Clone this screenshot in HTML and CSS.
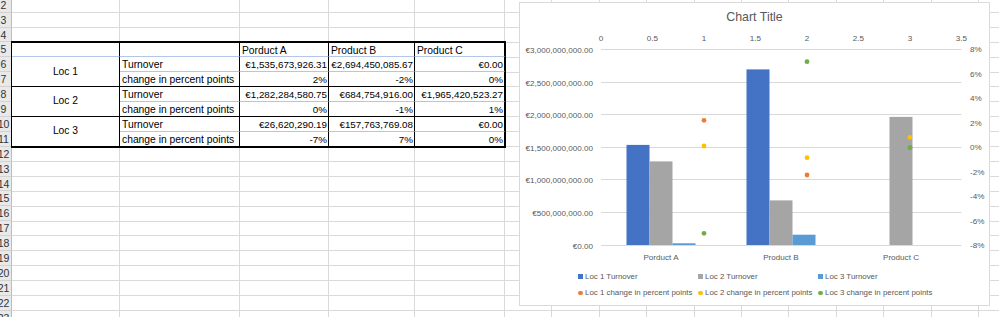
FILE: index.html
```html
<!DOCTYPE html>
<html>
<head>
<meta charset="utf-8">
<title>Sheet</title>
<link rel="stylesheet" href="styles.css">
</head>
<body>
<div class="sheet">
  <div class="rh">2</div><div class="rh">3</div><div class="rh">4</div><div class="rh">5</div>
  <div class="rh">6</div><div class="rh">7</div><div class="rh">8</div><div class="rh">9</div>
  <div class="rh">10</div><div class="rh">11</div><div class="rh">12</div><div class="rh">13</div>
  <div class="rh">14</div><div class="rh">15</div><div class="rh">16</div><div class="rh">17</div>
  <div class="rh">18</div><div class="rh">19</div><div class="rh">20</div><div class="rh">21</div>
  <div class="rh">22</div><div class="rh">23</div>

  <div class="tbl">
    <div class="c top bb"></div>
    <div class="c top bb"></div>
    <div class="c top bb">Porduct A</div>
    <div class="c top bb">Product B</div>
    <div class="c top bb">Product C</div>

    <div class="c loc">Loc 1</div>
    <div class="c bb">Turnover</div>
    <div class="c bb num">€1,535,673,926.31</div>
    <div class="c bb num">€2,694,450,085.67</div>
    <div class="c bb num">€0.00</div>
    <div class="c bk">change in percent points</div>
    <div class="c bk num">2%</div>
    <div class="c bk num">-2%</div>
    <div class="c bk num">0%</div>

    <div class="c loc">Loc 2</div>
    <div class="c bb">Turnover</div>
    <div class="c bb num">€1,282,284,580.75</div>
    <div class="c bb num">€684,754,916.00</div>
    <div class="c bb num">€1,965,420,523.27</div>
    <div class="c bk">change in percent points</div>
    <div class="c bk num">0%</div>
    <div class="c bk num">-1%</div>
    <div class="c bk num">1%</div>

    <div class="c loc">Loc 3</div>
    <div class="c bb">Turnover</div>
    <div class="c bb num">€26,620,290.19</div>
    <div class="c bb num">€157,763,769.08</div>
    <div class="c bb num">€0.00</div>
    <div class="c bk">change in percent points</div>
    <div class="c bk num">-7%</div>
    <div class="c bk num">7%</div>
    <div class="c bk num">0%</div>
  </div>
</div>

<div class="chart">
  <div class="title">Chart Title</div>
  <svg class="plot" width="469" height="240" viewBox="520 27 469 240">
    <g class="ax" text-anchor="middle">
      <text x="601" y="40.5">0</text>
      <text x="652.5" y="40.5">0.5</text>
      <text x="704" y="40.5">1</text>
      <text x="755.5" y="40.5">1.5</text>
      <text x="807" y="40.5">2</text>
      <text x="858.5" y="40.5">2.5</text>
      <text x="910" y="40.5">3</text>
      <text x="961.5" y="40.5">3.5</text>
    </g>
    <g class="grid">
      <line x1="601" x2="961.5" y1="49.5" y2="49.5"/>
      <line x1="601" x2="961.5" y1="82.5" y2="82.5"/>
      <line x1="601" x2="961.5" y1="114.5" y2="114.5"/>
      <line x1="601" x2="961.5" y1="147.5" y2="147.5"/>
      <line x1="601" x2="961.5" y1="179.5" y2="179.5"/>
      <line x1="601" x2="961.5" y1="212.5" y2="212.5"/>
      <line x1="601" x2="961.5" y1="245.5" y2="245.5"/>
    </g>
    <g class="ax" text-anchor="end">
      <text x="593" y="52.9">€3,000,000,000.00</text>
      <text x="593" y="85.5">€2,500,000,000.00</text>
      <text x="593" y="118.1">€2,000,000,000.00</text>
      <text x="593" y="150.7">€1,500,000,000.00</text>
      <text x="593" y="183.3">€1,000,000,000.00</text>
      <text x="593" y="215.9">€500,000,000.00</text>
      <text x="593" y="248.5">€0.00</text>
    </g>
    <g class="ax" text-anchor="start">
      <text x="970" y="52">8%</text>
      <text x="970" y="76.5">6%</text>
      <text x="970" y="101">4%</text>
      <text x="970" y="125.5">2%</text>
      <text x="970" y="150">0%</text>
      <text x="970" y="174.5">-2%</text>
      <text x="970" y="199">-4%</text>
      <text x="970" y="223.5">-6%</text>
      <text x="970" y="248">-8%</text>
    </g>
    <g class="bars">
      <rect class="b1" x="626.5" y="144.9" width="23" height="100.1"/>
      <rect class="b2" x="649.5" y="161.4" width="23" height="83.6"/>
      <rect class="b3" x="672.5" y="243.3" width="23" height="1.7"/>
      <rect class="b1" x="746.5" y="69.4" width="23" height="175.6"/>
      <rect class="b2" x="769.5" y="200.4" width="23" height="44.6"/>
      <rect class="b3" x="792.5" y="234.7" width="23" height="10.3"/>
      <rect class="b2" x="889.5" y="116.9" width="23" height="128.1"/>
    </g>
    <g class="pts">
      <circle class="p1" cx="704" cy="120.3" r="2.4"/>
      <circle class="p1" cx="807" cy="175" r="2.4"/>
      <circle class="p1" cx="910" cy="147.5" r="2.4"/>
      <circle class="p2" cx="704" cy="146" r="2.4"/>
      <circle class="p2" cx="807" cy="157.7" r="2.4"/>
      <circle class="p2" cx="910" cy="137.3" r="2.4"/>
      <circle class="p3" cx="704" cy="233.3" r="2.4"/>
      <circle class="p3" cx="807" cy="61.7" r="2.4"/>
      <circle class="p3" cx="910" cy="147.7" r="2.4"/>
    </g>
    <g class="ax" text-anchor="middle">
      <text x="661" y="259.6">Porduct A</text>
      <text x="781" y="259.6">Product B</text>
      <text x="901" y="259.6">Product C</text>
    </g>
  </svg>
  <div class="legend">
    <div class="li"><span class="sw sq k1"></span>Loc 1 Turnover</div>
    <div class="li"><span class="sw sq k2"></span>Loc 2 Turnover</div>
    <div class="li"><span class="sw sq k3"></span>Loc 3 Turnover</div>
    <div class="li"><span class="sw dot k4"></span>Loc 1 change in percent points</div>
    <div class="li"><span class="sw dot k5"></span>Loc 2 change in percent points</div>
    <div class="li"><span class="sw dot k6"></span>Loc 3 change in percent points</div>
  </div>
</div>
</body>
</html>
```
FILE: styles.css
```css
html, body {
  margin: 0;
  padding: 0;
}
body {
  width: 999px;
  height: 317px;
  overflow: hidden;
  position: relative;
  background: #fff;
  font-family: "Liberation Sans", Arial, sans-serif;
  color: #000;
}

/* spreadsheet grid */
.sheet {
  display: grid;
  grid-template-columns: 24px 108px 120px 89px 86px 90px repeat(11, 47.4px);
  grid-auto-rows: 14.9px;
  width: max-content;
  margin: -2.2px 0 0 -12px;
  background-image:
    repeating-linear-gradient(to bottom, transparent 0 13.9px, #dadada 13.9px 14.9px),
    linear-gradient(to right,
      transparent 0 131px, #dadada 131px 132px,
      transparent 132px 251px, #dadada 251px 252px,
      transparent 252px 340px, #dadada 340px 341px,
      transparent 341px 426px, #dadada 426px 427px,
      transparent 427px 516px, #dadada 516px 517px,
      transparent 517px),
    repeating-linear-gradient(to right, transparent 0 46.4px, #dadada 46.4px 47.4px);
  background-size: auto, auto, calc(100% - 517px) 100%;
  background-position: 0 0, 0 0, 517px 0;
  background-repeat: no-repeat;
}
.rh {
  grid-column: 1;
  box-sizing: border-box;
  background: #e9e9e9;
  border-right: 1px solid #bdbdbd;
  border-bottom: 1px solid #d2d2d2;
  padding: 1px 0 0 8px;
  font-size: 10.5px;
  line-height: 13px;
  text-align: center;
  color: #333;
  white-space: nowrap;
}

/* data table */
.tbl {
  grid-row: 4 / 11;
  grid-column: 2 / 7;
  display: grid;
  grid-template-columns: 108px 120px 89px 86px 90px;
  grid-template-rows: repeat(7, 14.9px);
  background: #fff;
  box-shadow: 0 0 0 1px #000;
}
.c {
  box-sizing: border-box;
  display: flex;
  align-items: center;
  padding: 2px 2px 0 2px;
  border-right: 1px solid #000;
  font-size: 10.3px;
  line-height: 1;
  white-space: nowrap;
  overflow: hidden;
}
.top { border-top: 1px solid #000; }
.bb { border-bottom: 1px solid #b4c6e7; }
.bk { border-bottom: 1px solid #000; }
.loc {
  grid-row: span 2;
  justify-content: center;
  padding-top: 0;
  border-bottom: 1px solid #000;
}
.num {
  justify-content: flex-end;
  padding-right: 1px;
  font-size: 9.8px;
}

/* chart */
.chart {
  position: absolute;
  left: 519px;
  top: 2px;
  width: 471px;
  height: 304px;
  box-sizing: border-box;
  border: 1px solid #d9d9d9;
  background: #fff;
  display: flex;
  flex-direction: column;
}
.title {
  box-sizing: border-box;
  height: 24px;
  padding-top: 5px;
  line-height: 19px;
  text-align: center;
  font-size: 12.4px;
  color: #595959;
}
.plot { display: block; }
.ax text {
  font-family: "Liberation Sans", Arial, sans-serif;
  font-size: 8.1px;
  fill: #595959;
}
.grid line {
  stroke: #d9d9d9;
  stroke-width: 1;
}
.b1 { fill: #4472c4; }
.b2 { fill: #a5a5a5; }
.b3 { fill: #5b9bd5; }
.p1 { fill: #ed7d31; }
.p2 { fill: #ffc000; }
.p3 { fill: #70ad47; }

.legend {
  display: grid;
  grid-template-columns: repeat(3, 120px);
  grid-auto-rows: 16.5px;
  padding: 1px 0 0 58px;
  font-size: 7.9px;
  color: #595959;
}
.li {
  display: flex;
  align-items: center;
  gap: 2.5px;
  white-space: nowrap;
}
.sw {
  flex: none;
  width: 4.5px;
  height: 4.5px;
}
.dot { border-radius: 50%; }
.k1 { background: #4472c4; }
.k2 { background: #a5a5a5; }
.k3 { background: #5b9bd5; }
.k4 { background: #ed7d31; }
.k5 { background: #ffc000; }
.k6 { background: #70ad47; }
```
